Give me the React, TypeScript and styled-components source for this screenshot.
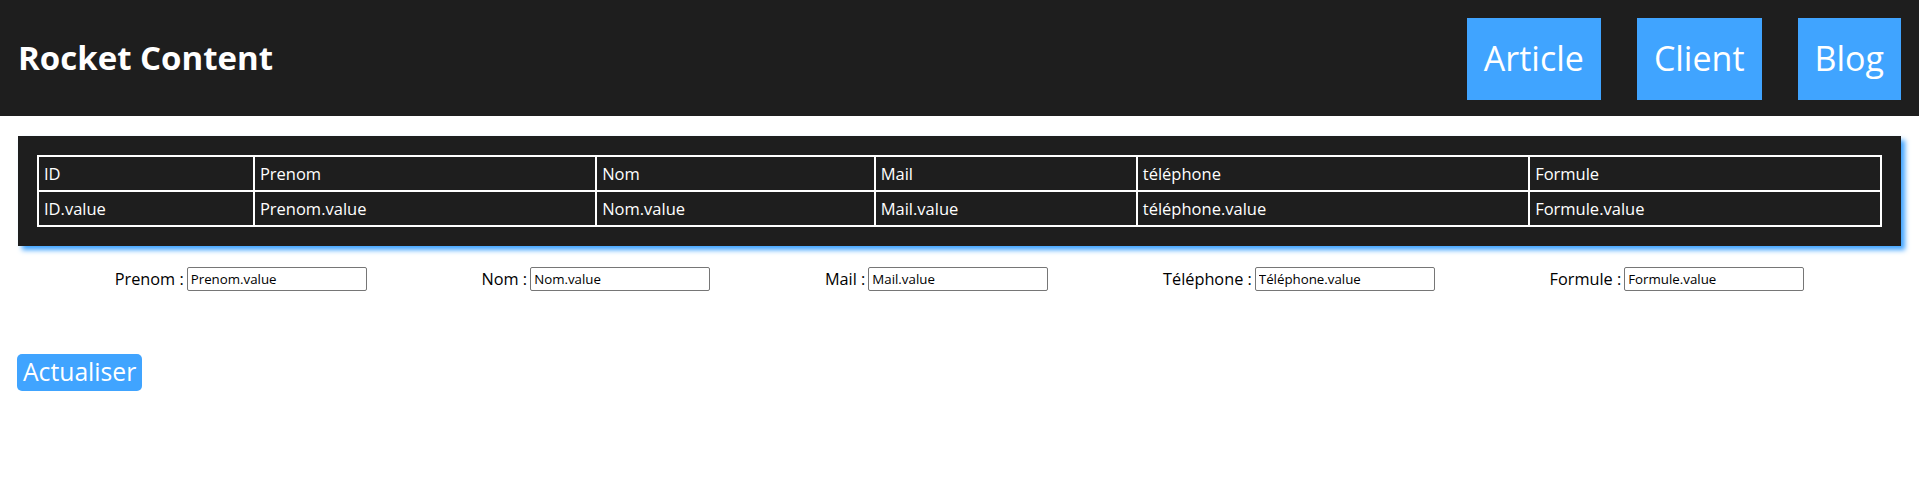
import React from "react";
import styled, {createGlobalStyle} from "styled-components";

const GlobalStyle = createGlobalStyle`
  body {
    margin: 0;
    background: #ffffff;
    font-family: "Open Sans", "Noto Sans", sans-serif;
  }
`;

const BLUE = "#40a4ff";
const DARK = "#1e1e1e";

const Header = styled.header`
  display: flex;
  flex-flow: row nowrap;
  justify-content: space-between;
  align-items: center;
  height: 116px;
  padding: 0 18px;
  background: ${DARK};
`;

const Title = styled.h1`
  margin: 0 0 2px 0;
  color: #ffffff;
  font-size: 33px;
  font-weight: 700;
`;

const Nav = styled.nav`
  display: flex;
  flex-flow: row nowrap;
  gap: 36px;
  margin-top: 1px;
`;

const NavButton = styled.button`
  height: 82px;
  padding: 0 17px 2px 17px;
  border: none;
  background: ${BLUE};
  color: #ffffff;
  font-family: "Open Sans", "Noto Sans", sans-serif;
  font-size: 34px;
  font-weight: 400;
  cursor: pointer;
`;

const TablePanel = styled.section`
  margin: 20px 18px 0 18px;
  padding: 19px;
  background: ${DARK};
  box-shadow: 4px 4px 5px ${BLUE};
`;

const Table = styled.table`
  width: 100%;
  border-collapse: collapse;
  border: 2px solid #ffffff;
  color: #ffffff;
  font-size: 16.5px;
`;

const Cell = styled.td<{ $width?: number }>`
  ${({$width}) => $width ? `width: ${$width}px;` : ""}
  height: 33px;
  padding: 0 5px;
  border: 2px solid #ffffff;
  text-align: left;
`;

const Form = styled.form`
  display: flex;
  flex-flow: row nowrap;
  justify-content: space-evenly;
  align-items: center;
  margin-top: 21px;
`;

const Field = styled.label`
  display: flex;
  align-items: center;
  gap: 3px;
  color: #000000;
  font-size: 16.3px;
`;

const Input = styled.input`
  box-sizing: border-box;
  width: 180px;
  height: 24px;
  padding: 1px 3px;
  border: 1px solid #767676;
  border-radius: 2px;
  font-family: "Open Sans", "Noto Sans", sans-serif;
  font-size: 13.3px;
  color: #000000;
`;

const RefreshButton = styled.button`
  display: block;
  height: 37px;
  margin: 63px 0 0 17px;
  padding: 0 6px 2px 6px;
  border: none;
  border-radius: 5px;
  background: ${BLUE};
  color: #ffffff;
  font-family: "Open Sans", "Noto Sans", sans-serif;
  font-size: 24.7px;
  cursor: pointer;
`;

const columns = [
    {key: "ID", width: 212},
    {key: "Prenom", width: 343},
    {key: "Nom", width: 277},
    {key: "Mail", width: 260},
    {key: "téléphone", width: 395},
    {key: "Formule", width: 353},
];

const fields = ["Prenom", "Nom", "Mail", "Téléphone", "Formule"];

export default function App() {
    return (
        <>
            <GlobalStyle/>
            <Header>
                <Title>Rocket Content</Title>
                <Nav>
                    <NavButton>Article</NavButton>
                    <NavButton>Client</NavButton>
                    <NavButton>Blog</NavButton>
                </Nav>
            </Header>
            <TablePanel>
                <Table>
                    <tbody>
                    <tr>
                        {columns.map(col => <Cell key={col.key} $width={col.width}>{col.key}</Cell>)}
                    </tr>
                    <tr>
                        {columns.map(col => <Cell key={col.key}>{col.key}.value</Cell>)}
                    </tr>
                    </tbody>
                </Table>
            </TablePanel>
            <Form onSubmit={e => e.preventDefault()}>
                {fields.map(name => (
                    <Field key={name}>
                        {name} :
                        <Input type="text" defaultValue={`${name}.value`}/>
                    </Field>
                ))}
            </Form>
            <RefreshButton>Actualiser</RefreshButton>
        </>
    );
}
